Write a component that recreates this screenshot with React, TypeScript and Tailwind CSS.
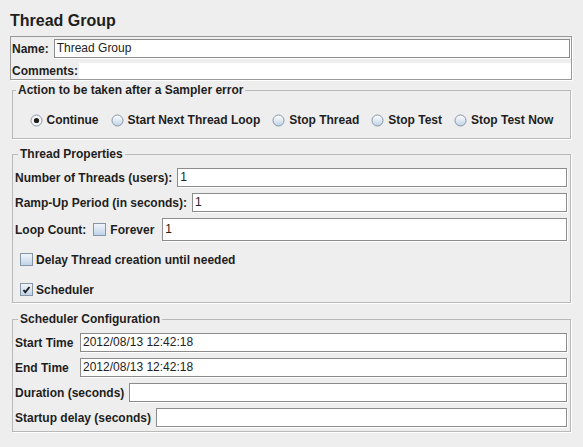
import React from 'react';

const Radio: React.FC<{ checked?: boolean }> = ({ checked }) => (
  <svg width="13" height="13" viewBox="0 0 13 13" className="shrink-0">
    <defs>
      <linearGradient id="radioFill" x1="0" y1="0" x2="0" y2="1">
        <stop offset="0" stopColor="#ffffff" />
        <stop offset="1" stopColor="#bfd2e8" />
      </linearGradient>
    </defs>
    <circle cx="6.5" cy="6.5" r="5.5" fill={checked ? '#f4f4f4' : 'url(#radioFill)'} stroke="#8796a6" />
    {checked && <circle cx="6.5" cy="6.5" r="2.6" fill="#1e1e1e" />}
  </svg>
);

const Checkbox: React.FC<{ checked?: boolean; className?: string }> = ({ checked, className }) => (
  <svg width="13" height="13" viewBox="0 0 13 13" className={`shrink-0 ${className ?? ''}`}>
    <defs>
      <linearGradient id="boxFill" x1="0" y1="0" x2="0" y2="1">
        <stop offset="0" stopColor="#f2f6fb" />
        <stop offset="1" stopColor="#bfd2e8" />
      </linearGradient>
    </defs>
    <rect x="0.5" y="0.5" width="12" height="12" fill="url(#boxFill)" stroke="#8796a6" />
    {checked && <polyline points="3.5,7 5.3,9.3 9.5,4" fill="none" stroke="#1e1e1e" strokeWidth="1.9" />}
  </svg>
);

const Field: React.FC<{ value?: string; className?: string }> = ({ value, className }) => (
  <div
    className={`flex-1 bg-white border border-[#8c8c8c] shadow-[1px_1px_0_#ffffff] pl-[2px] text-[12px] font-normal leading-[17px] text-[#222] whitespace-nowrap ${className ?? 'h-[19px]'}`}
  >
    {value}
  </div>
);

const Group: React.FC<{ title: string; className?: string; children: React.ReactNode }> = ({ title, className, children }) => (
  <fieldset className={`ml-[12px] mr-[12px] border border-[#b9b9b9] shadow-[1px_1px_0_#ffffff] ${className ?? ''}`}>
    <legend className="ml-[3px] px-[2px] font-bold text-[12px] leading-[14px]">{title}</legend>
    {children}
  </fieldset>
);

const LabeledField: React.FC<{ label: string; value?: string; labelClass?: string }> = ({ label, value, labelClass }) => (
  <div className="flex items-center gap-[5px] h-[19px]">
    <span className={`font-bold whitespace-nowrap ${labelClass ?? ''}`}>{label}</span>
    <Field value={value} />
  </div>
);

const actions = [
  { label: 'Continue', checked: true },
  { label: 'Start Next Thread Loop' },
  { label: 'Stop Thread' },
  { label: 'Stop Test' },
  { label: 'Stop Test Now' },
];

export default function App() {
  return (
    <div className="w-[583px] h-[447px] bg-[#eeeeee] text-[#1e1e1e] text-[12px] leading-[14px] font-['Liberation_Sans',Arial,sans-serif] overflow-hidden">
      <div className="pl-[10px] pt-[12px] text-[16px] leading-[18px] font-bold">Thread Group</div>

      <div className="ml-[10px] mr-[11px] mt-[6px] border border-[#999999] shadow-[1px_1px_0_#ffffff] pl-[1px] pr-[1px] pt-[2px]">
        <div className="flex items-center gap-[5px] h-[19px]">
          <span className="font-bold">Name:</span>
          <Field value="Thread Group" />
        </div>
        <div className="flex items-center h-[16px] mt-[5px]">
          <span className="font-bold">Comments:</span>
          <div className="flex-1 h-[16px] bg-white ml-[1px] -mr-[1px]" />
        </div>
      </div>

      <Group title="Action to be taken after a Sampler error" className="mt-[3px] pt-[13px] pb-[8px]">
        <div className="flex items-center justify-center gap-[12px] h-[20px]">
          {actions.map(a => (
            <div key={a.label} className="flex items-center gap-[4px]">
              <Radio checked={a.checked} />
              <span className="font-bold whitespace-nowrap">{a.label}</span>
            </div>
          ))}
        </div>
      </Group>

      <Group title="Thread Properties" className="mt-[8px] pt-[7px] pb-[1px] pl-[2px] pr-[3px]">
        <div className="flex flex-col">
          <LabeledField label="Number of Threads (users):" value="1" />
          <div className="mt-[6px]">
            <LabeledField label="Ramp-Up Period (in seconds):" value="1" />
          </div>
          <div className="flex items-center h-[23px] mt-[6px]">
            <span className="font-bold">Loop Count:</span>
            <Checkbox className="ml-[7px]" />
            <span className="ml-[4px] font-bold">Forever</span>
            <Field value="1" className="ml-[8px] h-[23px] leading-[21px]" />
          </div>
          <div className="flex items-center h-[23px] mt-[7px] pl-[5px]">
            <Checkbox />
            <span className="ml-[3px] font-bold">Delay Thread creation until needed</span>
          </div>
          <div className="flex items-center h-[23px] mt-[7px] pl-[5px]">
            <Checkbox checked />
            <span className="ml-[3px] font-bold">Scheduler</span>
          </div>
        </div>
      </Group>

      <Group title="Scheduler Configuration" className="mt-[9px] pt-[7px] pb-[4px] pl-[2px] pr-[3px]">
        <div className="flex flex-col gap-[6px]">
          <LabeledField label="Start Time" value="2012/08/13 12:42:18" labelClass="w-[60px]" />
          <LabeledField label="End Time" value="2012/08/13 12:42:18" labelClass="w-[60px]" />
          <LabeledField label="Duration (seconds)" />
          <LabeledField label="Startup delay (seconds)" />
        </div>
      </Group>
    </div>
  );
}
